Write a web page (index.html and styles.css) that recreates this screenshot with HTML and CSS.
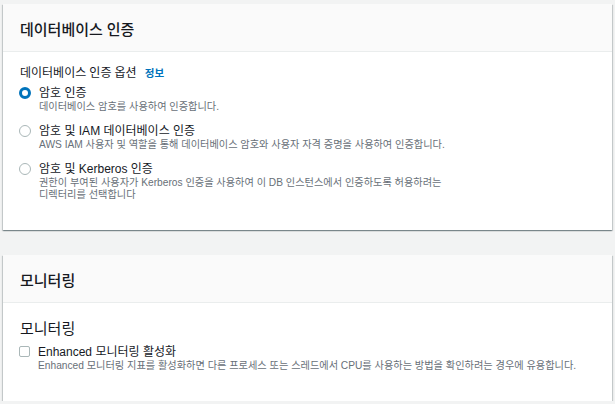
FILE: index.html
```html
<!DOCTYPE html>
<html lang="ko">
<head>
<meta charset="utf-8">
<link rel="stylesheet" href="styles.css">
</head>
<body>
<div class="page">
  <section class="card">
    <div class="card-header"><h2 class="card-title">데이터베이스 인증</h2></div>
    <div class="card-body">
      <div class="field-label">데이터베이스 인증 옵션 <span class="info">정보</span></div>
      <div class="options">
        <div class="option">
          <span class="radio checked"></span>
          <div class="option-text">
            <div class="option-label">암호 인증</div>
            <div class="option-desc">데이터베이스 암호를 사용하여 인증합니다.</div>
          </div>
        </div>
        <div class="option">
          <span class="radio"></span>
          <div class="option-text">
            <div class="option-label">암호 및 IAM 데이터베이스 인증</div>
            <div class="option-desc">AWS IAM 사용자 및 역할을 통해 데이터베이스 암호와 사용자 자격 증명을 사용하여 인증합니다.</div>
          </div>
        </div>
        <div class="option">
          <span class="radio"></span>
          <div class="option-text">
            <div class="option-label">암호 및 Kerberos 인증</div>
            <div class="option-desc narrow">권한이 부여된 사용자가 Kerberos 인증을 사용하여 이 DB 인스턴스에서 인증하도록 허용하려는 디렉터리를 선택합니다</div>
          </div>
        </div>
      </div>
    </div>
  </section>

  <section class="card card-monitor">
    <div class="card-header"><h2 class="card-title">모니터링</h2></div>
    <div class="card-body monitor-body">
      <h3 class="sub-title">모니터링</h3>
      <div class="option">
        <span class="checkbox"></span>
        <div class="option-text">
          <div class="option-label">Enhanced 모니터링 활성화</div>
          <div class="option-desc">Enhanced 모니터링 지표를 활성화하면 다른 프로세스 또는 스레드에서 CPU를 사용하는 방법을 확인하려는 경우에 유용합니다.</div>
        </div>
      </div>
    </div>
  </section>
</div>
</body>
</html>
```

FILE: styles.css
```css
html, body {
  margin: 0;
  padding: 0;
  background: #f2f3f3;
}
body {
  font-family: "Noto Sans", "Noto Sans CJK KR", sans-serif;
  color: #16191f;
  word-break: keep-all;
}
.page {
  padding: 4px 3px 0 3px;
  display: flex;
  flex-direction: column;
  gap: 25px;
}
.card {
  background: #fff;
  box-shadow: 0 1px 1px 0 rgba(0, 28, 36, 0.3), 1px 1px 1px 0 rgba(0, 28, 36, 0.15), -1px 1px 1px 0 rgba(0, 28, 36, 0.15);
}
.card-header {
  background: #fafafa;
  border-bottom: 1px solid #eaeded;
  height: 47px;
  padding: 0 17px;
  display: flex;
  align-items: center;
}
.card-title {
  margin: 2px 0 0 0;
  font-size: 15px;
  font-weight: 500;
  line-height: 20px;
}
.card-body {
  padding: 13px 17px 29px 17px;
}
.field-label {
  font-size: 12px;
  line-height: 16px;
}
.info {
  color: #0073bb;
  font-weight: 700;
  font-size: 10.5px;
  margin-left: 5px;
}
.options {
  display: flex;
  flex-direction: column;
  gap: 11px;
  margin-top: 5px;
}
.option {
  display: flex;
  align-items: flex-start;
}
.radio {
  flex: none;
  width: 12px;
  height: 12px;
  box-sizing: border-box;
  border-radius: 50%;
  border: 1px solid #aab7b8;
  background: #fff;
  margin: 1px 8px 0 -1px;
}
.radio.checked {
  border: 3.5px solid #0073bb;
}
.checkbox {
  flex: none;
  width: 11px;
  height: 11px;
  box-sizing: border-box;
  border: 1px solid #aab7b8;
  border-radius: 2px;
  background: #fff;
  margin: 1px 8px 0 -1px;
}
.option-label,
.option-desc {
  font-family: "Liberation Sans", "Noto Sans CJK KR", sans-serif;
}
.option-label {
  font-size: 12px;
  line-height: 14px;
}
.option-desc {
  font-size: 10.2px;
  line-height: 12px;
  margin-top: 1px;
  color: #687078;
}
.narrow {
  max-width: 420px;
}
.monitor-body {
  padding: 15px 17px 29px 17px;
}
.sub-title {
  margin: 0 0 7px 0;
  font-size: 15px;
  font-weight: 400;
  line-height: 20px;
}
```
